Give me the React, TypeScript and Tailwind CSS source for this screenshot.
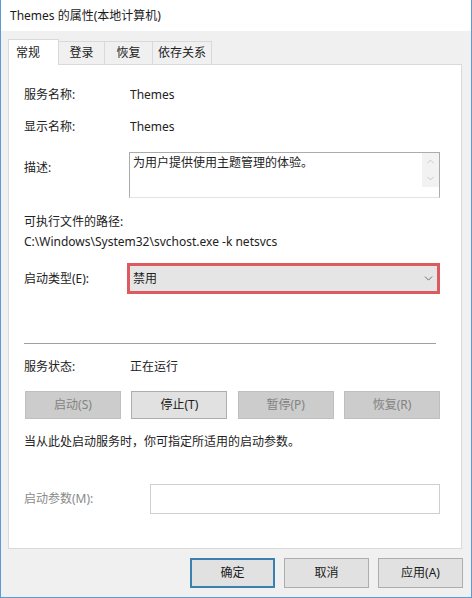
import { ChevronDown, ChevronUp } from "lucide-react";

const font = { fontFamily: '"Segoe UI", "Noto Sans", "Noto Sans CJK SC", sans-serif' };

const tabs = [
    { label: "常规", width: "w-[51px]", active: true },
    { label: "登录", width: "w-[46px]", active: false },
    { label: "恢复", width: "w-[48px]", active: false },
    { label: "依存关系", width: "w-[59px]", active: false },
];

function ServiceButton({ label, disabled }: { label: string; disabled?: boolean }) {
    return (
        <div
            className={
                disabled
                    ? "w-[96px] h-[28px] flex items-center justify-center border border-[#bfbfbf] bg-[#cccccc] text-[#838383]"
                    : "w-[96px] h-[28px] flex items-center justify-center border border-[#adadad] bg-[#e1e1e1] text-[#1a1a1a]"
            }
        >
            {label}
        </div>
    );
}

function DialogButton({ label, primary }: { label: string; primary?: boolean }) {
    return (
        <div
            className={
                primary
                    ? "w-[85px] h-[30px] flex items-center justify-center border-2 border-[#3c7fb1] bg-[#e1e1e1] text-[#1a1a1a]"
                    : "w-[85px] h-[30px] flex items-center justify-center border border-[#adadad] bg-[#e1e1e1] text-[#1a1a1a]"
            }
        >
            {label}
        </div>
    );
}

export default function App() {
    return (
        <div className="w-[472px] h-[598px] bg-[#f0f0f0] border border-t-0 border-[#5b9bd5] flex flex-col text-[12px] text-[#222]" style={font}>
            <div className="h-[31px] bg-white flex items-center pl-[9px] text-[#1a1a1a]">
                Themes 的属性(本地计算机)
            </div>

            {/* tabs */}
            <div className="flex items-end pl-[7px] mt-[7px] h-[26px]">
                {tabs.map(tab => (
                    <div
                        key={tab.label}
                        className={
                            tab.active
                                ? `${tab.width} h-[26px] bg-white border border-b-0 border-[#d9d9d9] flex items-center pl-[7px] relative top-[1px] z-10`
                                : `${tab.width} h-[23px] border border-l-0 border-b-0 border-[#d9d9d9] flex items-center justify-center`
                        }
                    >
                        {tab.label}
                    </div>
                ))}
            </div>

            {/* panel */}
            <div className="ml-[7px] mr-[9px] h-[485px] bg-white border border-[#d9d9d9] pl-[15px] pr-[21px] flex flex-col">
                <div className="flex h-[16px] items-center mt-[22px]">
                    <span className="w-[106px]">服务名称:</span>
                    <span>Themes</span>
                </div>
                <div className="flex h-[16px] items-center mt-[16px]">
                    <span className="w-[106px]">显示名称:</span>
                    <span>Themes</span>
                </div>
                <div className="flex mt-[17px]">
                    <span className="w-[105px] pt-[7px]">描述:</span>
                    <div className="flex-1 h-[46px] border border-[#ababab] border-b-[#e3e3e3] flex">
                        <div className="flex-1 pl-[3px] pt-[1px]">为用户提供使用主题管理的体验。</div>
                        <div className="w-[17px] h-[34px] flex flex-col items-center justify-between py-[3px] bg-[#f2f2f2] text-[#b5b5b5]">
                            <ChevronUp size={11} strokeWidth={1.5} />
                            <ChevronDown size={11} strokeWidth={1.5} />
                        </div>
                    </div>
                </div>
                <div className="h-[16px] flex items-center mt-[16px]">可执行文件的路径:</div>
                <div className="h-[16px] flex items-center mt-[4px]">C:\Windows\System32\svchost.exe -k netsvcs</div>
                <div className="flex items-center mt-[13px]">
                    <span className="w-[103px]">启动类型(E):</span>
                    <div className="flex-1 h-[31px] border-[3px] border-[#dc5a60] bg-[#e5e5e5] flex items-center justify-between pl-[3px] pr-[2px]">
                        <span>禁用</span>
                        <ChevronDown size={13} strokeWidth={1.5} className="text-[#555]" />
                    </div>
                </div>
                <div className="h-px bg-[#a0a0a0] mt-[49px] mr-[4px]" />
                <div className="flex h-[16px] items-center mt-[15px]">
                    <span className="w-[106px]">服务状态:</span>
                    <span>正在运行</span>
                </div>
                <div className="flex justify-between mt-[16px] pl-[1px]">
                    <ServiceButton label="启动(S)" disabled />
                    <ServiceButton label="停止(T)" />
                    <ServiceButton label="暂停(P)" disabled />
                    <ServiceButton label="恢复(R)" disabled />
                </div>
                <div className="h-[16px] flex items-center mt-[15px]">当从此处启动服务时，你可指定所适用的启动参数。</div>
                <div className="flex items-center mt-[34px]">
                    <span className="w-[126px] text-[#8a8a8a]">启动参数(M):</span>
                    <div className="flex-1 h-[30px] border border-[#cfcfcf] bg-white" />
                </div>
            </div>

            {/* dialog buttons */}
            <div className="flex justify-end gap-[9px] pr-[8px] mt-[9px]">
                <DialogButton label="确定" primary />
                <DialogButton label="取消" />
                <DialogButton label="应用(A)" />
            </div>
        </div>
    );
}
